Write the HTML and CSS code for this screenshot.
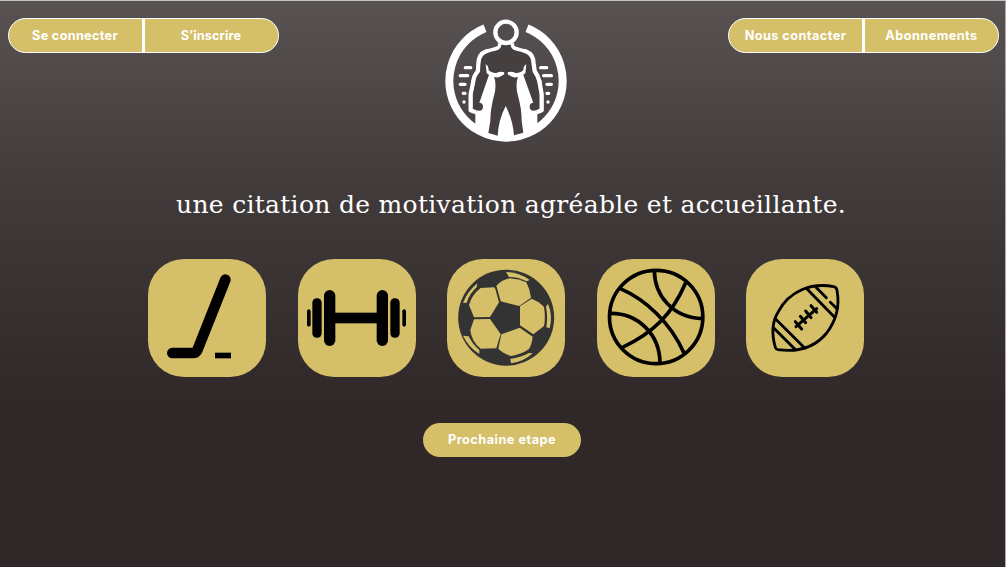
FILE: index.html
```html
<!DOCTYPE html>
<html lang="fr">
<head>
<meta charset="utf-8">
<title>Accueil</title>
<link rel="stylesheet" href="styles.css">
</head>
<body>
<main class="page">
  <header class="header">
    <nav class="pill">
      <a class="pill-item connect">Se connecter</a>
      <a class="pill-item signup">S’inscrire</a>
    </nav>
    <svg class="logo" viewBox="0 0 420 420" aria-label="Logo">
      <path d="M147 52A170 170 0 1 0 273 52" fill="none" stroke="#fff" stroke-width="24"/>
      <path d="M118 305L118 348Q210 420 304 348L304 305L316 296L317 210L298 180L265 165L155 165L121 180L106 210L105 296Z" fill="#fff"/>
      <path d="M192 97V107Q178 117 151 121Q127 130 127 160L126 180Q113 196 112 211L104 250V298L120 304M228 97V107Q242 117 269 121Q293 130 293 160L296 180Q307 196 310 211L317 250V298L302 304" fill="#453f40" stroke="#fff" stroke-width="13" stroke-linejoin="round"/>
      <path d="M196 101Q196 115 178 119Q160 122 151 128Q135 136 135 154L133 185Q121 197 119 213L111 250V293L120 296Q120 286 125 276Q137 244 146 216L153 177L165 189Q181 200 204 182L205 190Q191 200 174 196Q183 224 174 254Q163 294 163 330L157 366L185 374Q187 328 209 285Q231 328 234 373L262 365L257 330Q257 293 246 254Q237 224 246 196Q229 200 215 190L216 182Q239 200 255 189L267 177L274 216Q283 244 295 276Q300 286 300 296L309 293V250L302 213Q299 197 287 185L285 154Q285 136 269 128Q260 122 242 119Q224 115 224 101Z" fill="#453f40"/>
      <path d="M149 160Q158 165 158 178Q168 188 181 186Q194 180 204 184Q202 194 188 199Q170 201 152 187ZM271 160Q262 165 262 178Q252 188 239 186Q226 180 216 184Q218 194 232 199Q250 201 268 187Z" fill="#fff"/>
      <circle cx="129" cy="287" r="12" fill="#453f40"/><circle cx="293" cy="287" r="12" fill="#453f40"/>
      <circle cx="210" cy="64" r="32" fill="#514c4c" stroke="#fff" stroke-width="13"/>
      <path d="M88 170H104M73 194H95M73 220H87M82 247H87M314 170H332M323 194H346M333 220H346M333 247H338M84 273H84.1M336 273H336.1" fill="none" stroke="#fff" stroke-width="10" stroke-linecap="round"/>
    </svg>
    <nav class="pill">
      <a class="pill-item contact">Nous contacter</a>
      <a class="pill-item plans">Abonnements</a>
    </nav>
  </header>
  <h1 class="quote">une citation de motivation agréable et accueillante.</h1>
  <section class="sports">
    <button class="tile" aria-label="Hockey">
      <svg viewBox="18 20 354 354">
        <path d="M250 82L167 291Q163 302 151 302H91" fill="none" stroke="#000" stroke-width="32" stroke-linecap="round"/>
        <path d="M219 301H267V318H219Z"/>
      </svg>
    </button>
    <button class="tile" aria-label="Musculation">
      <svg viewBox="18 20 354 354">
        <rect x="120" y="181" width="146" height="32"/>
        <rect x="96" y="113" width="34" height="168" rx="17"/><rect x="254" y="113" width="34" height="168" rx="17"/>
        <rect x="61" y="138" width="28" height="118" rx="13"/><rect x="295" y="138" width="28" height="118" rx="13"/>
        <rect x="45" y="171" width="11" height="52" rx="5.5"/><rect x="331" y="171" width="11" height="52" rx="5.5"/>
      </svg>
    </button>
    <button class="tile" aria-label="Football">
      <svg viewBox="18 20 354 354">
        <circle cx="195.500" cy="196" r="144" fill="#333"/>
        <g fill="#d5bf69">
          <path d="M119 107L158 105Q162 106 163 110L174 150L147 194L99 195L84 158Q93 127 119 107Z"/>
          <path d="M166 100Q184 82 206 78Q234 80 256 90Q267 110 270 136L235 161L179 147Z"/>
          <path d="M237 162L272 139Q295 148 309 164Q314 195 309 221L277 246L237 219Z"/>
          <path d="M181 246L236 226L275 253Q273 276 263 291Q240 307 210 311Q186 303 172 289Z"/>
          <path d="M99 201L147 200L179 245L166 288L119 289Q91 267 88 233Z"/>
          <path d="M195 59Q234 60 266 83L257 87Q233 74 204 74Z"/>
          <path d="M321 154Q336 190 326 228L316 225Q321 191 315 163Z"/>
          <path d="M275 303Q247 329 210 333L208 320Q238 316 264 302Z"/>
          <path d="M66 250Q82 284 115 305V293Q94 275 83 252Z"/>
          <path d="M66 152Q80 116 109 93L107 105Q86 123 77 151Z"/>
        </g>
      </svg>
    </button>
    <button class="tile" aria-label="Basketball">
      <svg viewBox="18 20 354 354" fill="none" stroke="#000" stroke-width="11">
        <circle cx="195.500" cy="194" r="140"/>
        <path d="M88 109C164 142 238 210 279 302M190 55C191 130 246 197 335 199M284 91C244 185 188 241 93 286M58 183C139 182 207 244 207 333"/>
      </svg>
    </button>
    <button class="tile" aria-label="Football américain">
      <svg viewBox="15 20 354 354" fill="none" stroke="#000" stroke-width="8.500" stroke-linecap="round" stroke-linejoin="round">
        <path d="M103 285C92 247 93 208 112 178C145 116 211 90 278 103Q286 104 288 114C297 163 284 207 257 242C221 286 168 300 111 292Q105 291 103 285Z"/>
        <path d="M196 108L280 194M225 105L256 136M268 150L288 169M103 199L188 284M99 228L162 291"/>
        <path d="M165 223L227 169M210 160L227 180M194 176L210 196M178 192L194 211M163 208L182 230" stroke-width="9"/>
      </svg>
    </button>
  </section>
  <button class="next">Prochaine etape</button>
</main>
</body>
</html>
```
FILE: styles.css
```css
* {
  box-sizing: border-box;
}

body {
  margin: 0;
  background: #fff;
}

.page {
  width: 1006px;
  height: 567px;
  display: flex;
  flex-direction: column;
  align-items: center;
  border-top: 1px solid #c4c6c2;
  border-right: 1px solid #aaa;
  background: linear-gradient(#595252 0%, #413a3a 34%, #302828 72%, #302828 100%);
  color: #fff;
}

.header {
  width: 100%;
  display: flex;
  justify-content: space-between;
  align-items: flex-start;
  padding: 17px 6px 0 7.5px;
}

.pill {
  width: 271px;
  height: 35px;
  display: flex;
  border: 1.8px solid #fff;
  border-radius: 18px;
  background: #d5bf69;
  font: bold 12.700px/33px Inter, sans-serif;
  letter-spacing: 0.3px;
}

.pill-item {
  flex: 1;
  text-align: center;
  white-space: nowrap;
}

.pill-item:first-child {
  border-right: 3px solid #fff;
}

.signup {
  letter-spacing: 0.1px;
}

.contact,
.plans {
  letter-spacing: 0.45px;
}

.logo {
  width: 140px;
  height: 140px;
  margin: -7px 0 0 5px;
}

.quote {
  margin: 34px 0 0 17px;
  font: 400 25px/40px "DejaVu Serif", serif;
  letter-spacing: 0.3px;
  white-space: nowrap;
}

.sports {
  display: flex;
  gap: 31.5px;
  margin: 33.5px 0 0 7px;
}

.tile {
  width: 118px;
  height: 118px;
  padding: 0;
  border: 0;
  border-radius: 36px;
  background: #d5bf69;
}

.tile svg {
  display: block;
  width: 118px;
  height: 118px;
}

.next {
  width: 158px;
  height: 34px;
  margin: 46px 0 0 -1px;
  padding: 0;
  border: 0;
  border-radius: 17px;
  background: #d5bf69;
  color: #fff;
  font: bold 12.700px/34px Inter, sans-serif;
  letter-spacing: 0.5px;
}
```
